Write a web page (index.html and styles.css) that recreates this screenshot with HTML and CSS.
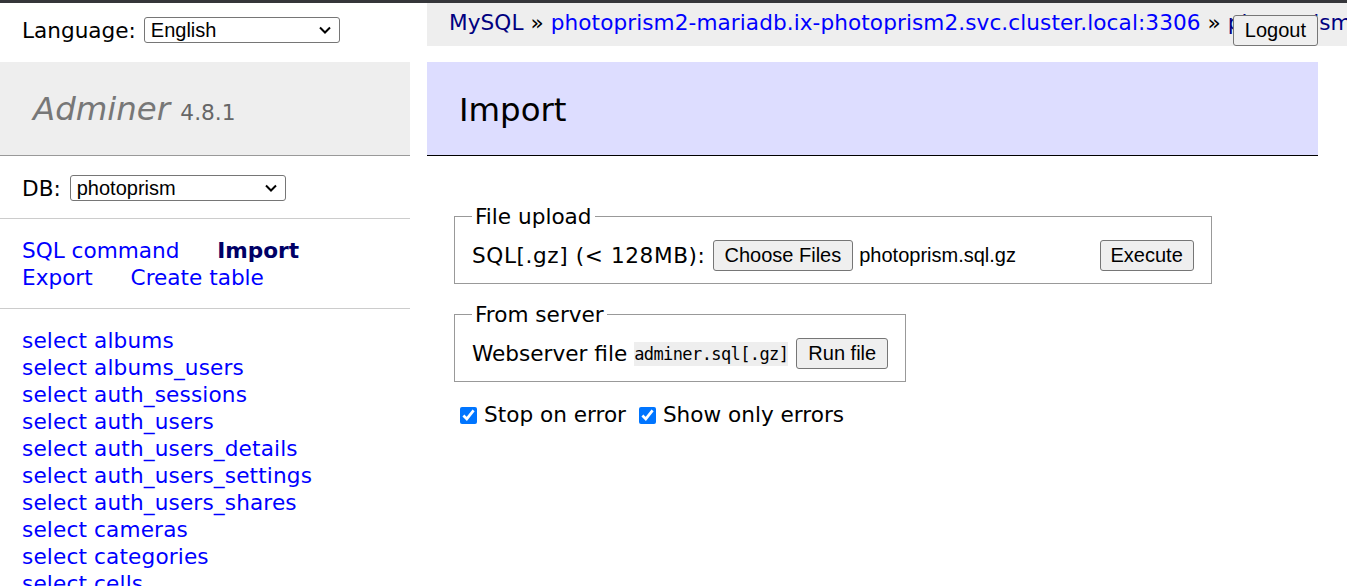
FILE: index.html
```html
<!DOCTYPE html>
<html lang="en">
<head>
<meta charset="utf-8">
<title>Import - photoprism - Adminer</title>
<link rel="stylesheet" href="styles.css">
</head>
<body>
<div class="chrome-bar"></div>
<div class="page">
  <aside class="sidebar">
    <form class="lang"><span>Language:</span>
      <span class="select-wrap sel-lang"><select class="sel"><option>English</option></select><svg class="chev" width="12" height="8" viewBox="0 0 12 8"><path d="M1 1.5 L6 6.5 L11 1.5" fill="none" stroke="#000" stroke-width="2"/></svg></span>
    </form>
    <h1 class="brand"><a class="brand-link" href="#">Adminer</a> <span class="version">4.8.1</span></h1>
    <form class="menu-block dbs"><span>DB:</span>
      <span class="select-wrap sel-db"><select class="sel"><option>photoprism</option></select><svg class="chev" width="12" height="8" viewBox="0 0 12 8"><path d="M1 1.5 L6 6.5 L11 1.5" fill="none" stroke="#000" stroke-width="2"/></svg></span>
    </form>
    <p class="menu-block links">
      <a class="nav" href="#">SQL command</a> <span class="nav active">Import</span>
      <a class="nav" href="#">Export</a> <a class="nav" href="#">Create table</a>
    </p>
    <ul class="menu-block tables">
      <li><a href="#">select albums</a></li>
      <li><a href="#">select albums_users</a></li>
      <li><a href="#">select auth_sessions</a></li>
      <li><a href="#">select auth_users</a></li>
      <li><a href="#">select auth_users_details</a></li>
      <li><a href="#">select auth_users_settings</a></li>
      <li><a href="#">select auth_users_shares</a></li>
      <li><a href="#">select cameras</a></li>
      <li><a href="#">select categories</a></li>
      <li><a href="#">select cells</a></li>
      <li><a href="#">select countries</a></li>
      <li><a href="#">select details</a></li>
    </ul>
  </aside>
  <main class="content">
    <div class="breadcrumb"><a class="visited" href="#">MySQL</a> » <a href="#">photoprism2-mariadb.ix-photoprism2.svc.cluster.local:3306</a> » <a class="visited" href="#">photoprism</a> » Import</div>
    <form class="logout"><button type="button" class="btn">Logout</button></form>
    <h2 class="title">Import</h2>
    <form class="import-form">
      <fieldset class="box">
        <legend class="box-legend">File upload</legend>
        <div class="box-row"><span class="label-wide">SQL[.gz] (&lt; 128MB):</span><span class="file-input"><button type="button" class="btn btn-choose">Choose Files</button><span class="file-name">photoprism.sql.gz</span></span><button type="button" class="btn">Execute</button></div>
      </fieldset>
      <fieldset class="box">
        <legend class="box-legend">From server</legend>
        <div class="box-row"><span>Webserver file</span><code class="code">adminer.sql[.gz]</code><button type="button" class="btn btn-run">Run file</button></div>
      </fieldset>
      <p class="options"><label class="opt"><input type="checkbox" class="chk" checked>Stop on error</label> <label class="opt"><input type="checkbox" class="chk" checked>Show only errors</label></p>
    </form>
  </main>
</div>
</body>
</html>
```
FILE: styles.css
```css
html, body {
  overflow: hidden;
}
body {
  margin: 0;
  background: #fff;
  color: #000;
  font-family: "DejaVu Sans", Verdana, sans-serif;
  font-size: 21.6px;
  line-height: 27px;
}
a {
  color: #0000ff;
  text-decoration: none;
}
a.visited {
  color: #000080;
}
.chrome-bar {
  height: 3px;
  background: #35363a;
}
.page {
  display: flex;
  align-items: flex-start;
}

/* sidebar */
.sidebar {
  flex: 0 0 410px;
  width: 410px;
}
.lang {
  margin: 0;
  display: flex;
  align-items: center;
  gap: 8px;
  height: 59px;
  box-sizing: border-box;
  padding: 0 22px 5px;
  white-space: nowrap;
}
.select-wrap {
  position: relative;
  display: inline-block;
  height: 26px;
}
.sel {
  appearance: none;
  -webkit-appearance: none;
  display: block;
  width: 100%;
  font-family: "Liberation Sans", Arial, sans-serif;
  font-size: 20px;
  height: 26px;
  line-height: 24px;
  border: 1px solid #767676;
  border-radius: 3px;
  background: #fff;
  color: #000;
  padding: 0 30px 0 6px;
  box-sizing: border-box;
  margin: 0;
}
.chev {
  position: absolute;
  right: 9px;
  top: 9px;
  pointer-events: none;
}
.sel-lang {
  width: 196px;
}
.sel-db {
  width: 216px;
}
.brand {
  margin: 0;
  padding: 27px 32px 25px 33px;
  font-size: 32.4px;
  line-height: 41px;
  font-weight: normal;
  background: #eee;
  border-bottom: 1px solid #999;
  color: #777;
}
.brand-link {
  color: #777;
  font-style: italic;
}
.version {
  color: #666;
  font-size: 21.7px;
  line-height: 1;
}
.menu-block {
  margin: 0;
  padding: 17px 22px;
  border-bottom: 1px solid #ccc;
}
.dbs {
  display: flex;
  align-items: center;
  gap: 9px;
  height: 63px;
  box-sizing: border-box;
  padding: 2px 22px 0;
  white-space: nowrap;
}
.links {
  padding-top: 18px;
  padding-bottom: 17px;
}
.nav {
  white-space: nowrap;
  margin-right: 31px;
}
.active {
  font-weight: bold;
  color: #000066;
}
.tables {
  list-style: none;
  border-bottom: none;
  white-space: nowrap;
  letter-spacing: 0.15px;
  padding-top: 18px;
}

/* content */
.content {
  flex: 1;
  min-width: 0;
  position: relative;
  padding: 0 29px 0 17px;
}
.breadcrumb {
  background: #eee;
  height: 43px;
  line-height: 40px;
  padding: 0 22px;
  margin-right: -29px;
  white-space: nowrap;
  overflow: hidden;
  letter-spacing: 0.08px;
}
.logout {
  position: absolute;
  top: 12px;
  right: 29px;
  margin: 0;
}
.btn {
  font-family: "Liberation Sans", Arial, sans-serif;
  font-size: 20px;
  height: 31px;
  padding: 0 10px;
  border: 1px solid #767676;
  border-radius: 3px;
  background: #efefef;
  color: #000;
  box-sizing: border-box;
  flex: none;
}
.logout .btn {
  padding: 0 11px;
}
.btn-choose {
  padding: 0 11px;
}
.btn-run {
  padding: 0 11px;
}
.title {
  margin: 16px 0 0;
  padding: 28px 32px 24px;
  font-size: 32.4px;
  line-height: 41px;
  font-weight: normal;
  background: #ddf;
  border-bottom: 1px solid #000;
  color: #000;
}
.import-form {
  display: flow-root;
  margin: 30px 0 0 27px;
}
.box {
  display: block;
  width: fit-content;
  min-width: 0;
  margin: 17px 0 0;
  padding: 10px 17px 12px;
  border: 1px solid #999;
}
.box-legend {
  padding: 0 3px;
  line-height: 27px;
}
.box-row {
  display: flex;
  align-items: center;
  gap: 7px;
  height: 31px;
  white-space: nowrap;
}
.label-wide {
  letter-spacing: 0.6px;
}
.file-input {
  display: flex;
  align-items: center;
  gap: 6px;
  width: 380px;
}
.file-name {
  font-family: "Liberation Sans", Arial, sans-serif;
  font-size: 20px;
}
.code {
  font-family: "DejaVu Sans Mono", "Liberation Mono", monospace;
  font-size: 17px;
  letter-spacing: -0.6px;
  line-height: 24px;
  background: #eee;
  margin-right: 1px;
}
.options {
  margin: 19px 0 0;
  line-height: 27px;
}
.opt {
  white-space: nowrap;
}
.chk {
  width: 17px;
  height: 17px;
  margin: 0 7px 0 6px;
  vertical-align: -2px;
  accent-color: #0075ff;
}
```
